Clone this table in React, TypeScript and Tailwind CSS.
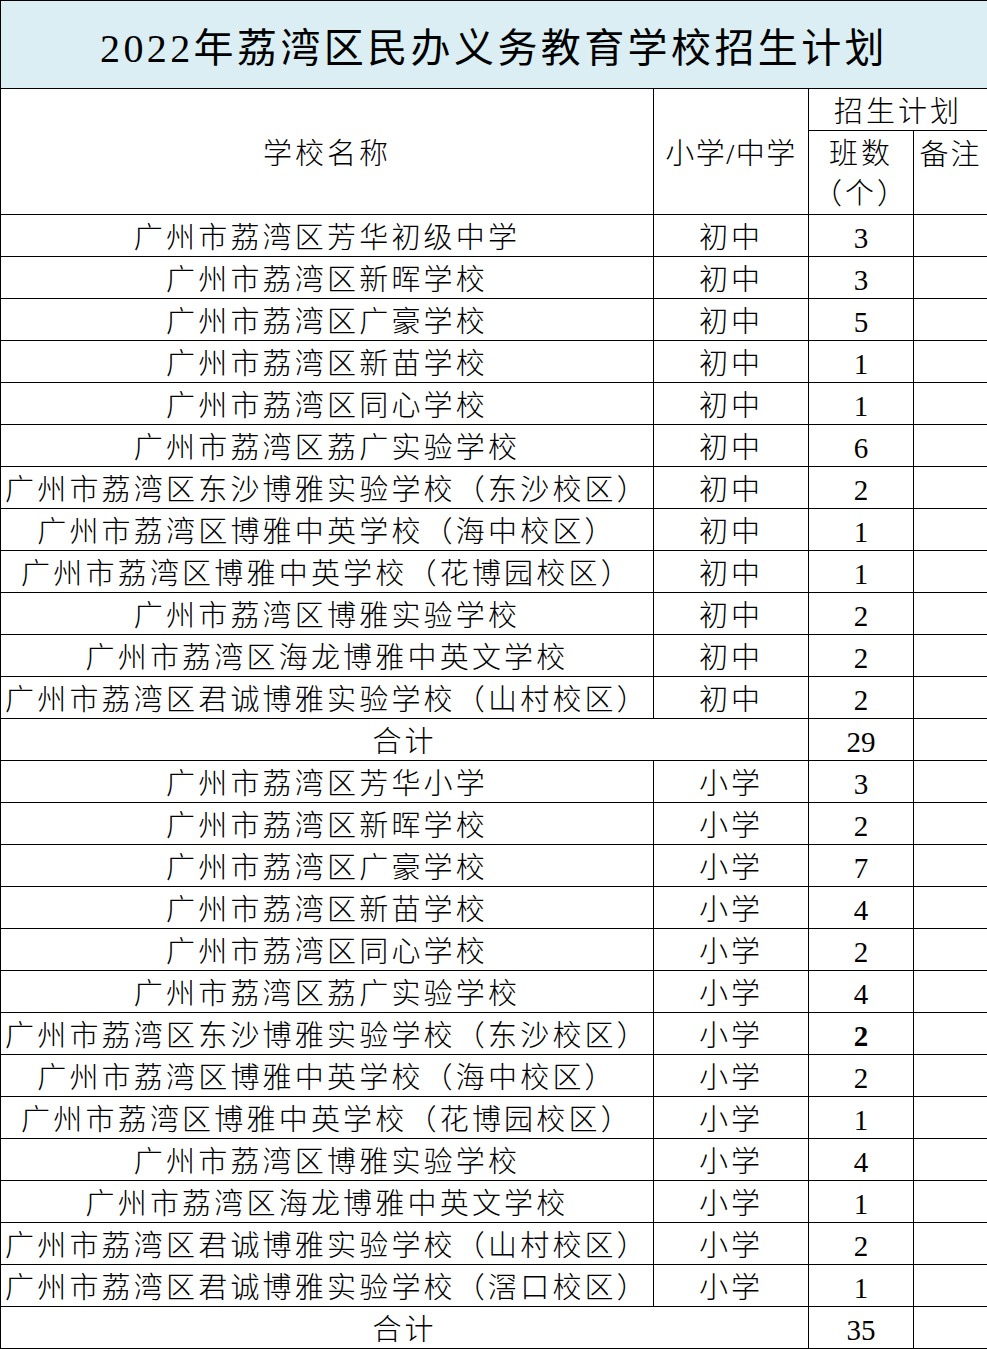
import React from 'react';

type Row = { name: string; level: string; count: string; bold?: boolean };

const middle: Row[] = [
  { name: '广州市荔湾区芳华初级中学', level: '初中', count: '3' },
  { name: '广州市荔湾区新晖学校', level: '初中', count: '3' },
  { name: '广州市荔湾区广豪学校', level: '初中', count: '5' },
  { name: '广州市荔湾区新苗学校', level: '初中', count: '1' },
  { name: '广州市荔湾区同心学校', level: '初中', count: '1' },
  { name: '广州市荔湾区荔广实验学校', level: '初中', count: '6' },
  { name: '广州市荔湾区东沙博雅实验学校（东沙校区）', level: '初中', count: '2' },
  { name: '广州市荔湾区博雅中英学校（海中校区）', level: '初中', count: '1' },
  { name: '广州市荔湾区博雅中英学校（花博园校区）', level: '初中', count: '1' },
  { name: '广州市荔湾区博雅实验学校', level: '初中', count: '2' },
  { name: '广州市荔湾区海龙博雅中英文学校', level: '初中', count: '2' },
  { name: '广州市荔湾区君诚博雅实验学校（山村校区）', level: '初中', count: '2' },
];

const primary: Row[] = [
  { name: '广州市荔湾区芳华小学', level: '小学', count: '3' },
  { name: '广州市荔湾区新晖学校', level: '小学', count: '2' },
  { name: '广州市荔湾区广豪学校', level: '小学', count: '7' },
  { name: '广州市荔湾区新苗学校', level: '小学', count: '4' },
  { name: '广州市荔湾区同心学校', level: '小学', count: '2' },
  { name: '广州市荔湾区荔广实验学校', level: '小学', count: '4' },
  { name: '广州市荔湾区东沙博雅实验学校（东沙校区）', level: '小学', count: '2', bold: true },
  { name: '广州市荔湾区博雅中英学校（海中校区）', level: '小学', count: '2' },
  { name: '广州市荔湾区博雅中英学校（花博园校区）', level: '小学', count: '1' },
  { name: '广州市荔湾区博雅实验学校', level: '小学', count: '4' },
  { name: '广州市荔湾区海龙博雅中英文学校', level: '小学', count: '1' },
  { name: '广州市荔湾区君诚博雅实验学校（山村校区）', level: '小学', count: '2' },
  { name: '广州市荔湾区君诚博雅实验学校（滘口校区）', level: '小学', count: '1' },
];

// every cell: 1px black grid, centred text; rows come out at 42px (5px pad + 35px line + border)
const cell = 'border border-black text-center align-middle whitespace-nowrap px-0 pb-0';
const row = 'pt-[5px] leading-[35px]';

function DataRow({ row: r }: { row: Row }) {
  return (
    <tr className="h-[42px]">
      <td className={`${cell} ${row} tracking-[3.2px]`}>{r.name}</td>
      <td className={`${cell} ${row} tracking-[3px]`}>{r.level}</td>
      <td className={`${cell} ${row} ${r.bold ? 'font-bold' : ''}`}>{r.count}</td>
      <td className={`${cell} ${row}`}></td>
    </tr>
  );
}

function TotalRow({ total }: { total: string }) {
  return (
    <tr className="h-[42px]">
      <td colSpan={2} className={`${cell} ${row} tracking-[3px]`}>合计</td>
      <td className={`${cell} ${row}`}>{total}</td>
      <td className={`${cell} ${row}`}></td>
    </tr>
  );
}

export default function App() {
  return (
    <div className="w-[987px] bg-white text-black font-['Liberation_Serif','Noto_Sans_CJK_SC',serif] font-light text-[29px] leading-[40px]">
      <table className="w-[987px] table-fixed border-collapse">
        <colgroup>
          <col className="w-[653px]" />
          <col className="w-[155px]" />
          <col className="w-[105px]" />
          <col className="w-[74px]" />
        </colgroup>
        <tbody>
          <tr className="h-[88px]">
            <td
              colSpan={4}
              className={`${cell} bg-[#daeef3] text-[40px] font-normal pt-[8px] leading-[78px] tracking-[3.4px]`}
            >
              2022年荔湾区民办义务教育学校招生计划
            </td>
          </tr>
          <tr className="h-[42px]">
            <td rowSpan={3} className={`${cell} pt-[4px] tracking-[3px]`}>学校名称</td>
            <td rowSpan={3} className={`${cell} pt-[4px] tracking-[1.5px]`}>小学/中学</td>
            <td colSpan={2} className={`${cell} ${row} tracking-[3px]`}>招生计划</td>
          </tr>
          <tr className="h-[42px]">
            <td rowSpan={2} className={`${cell} pt-[2px] leading-[40px] tracking-[3px]`}>
              班数
              <br />
              （个）
            </td>
            <td rowSpan={2} className={`${cell} !align-top pt-[4px] leading-[40px] tracking-[2px]`}>备注</td>
          </tr>
          <tr className="h-[42px]"></tr>
          {middle.map((r, i) => (
            <DataRow key={'m' + i} row={r} />
          ))}
          <TotalRow total="29" />
          {primary.map((r, i) => (
            <DataRow key={'p' + i} row={r} />
          ))}
          <TotalRow total="35" />
        </tbody>
      </table>
    </div>
  );
}
